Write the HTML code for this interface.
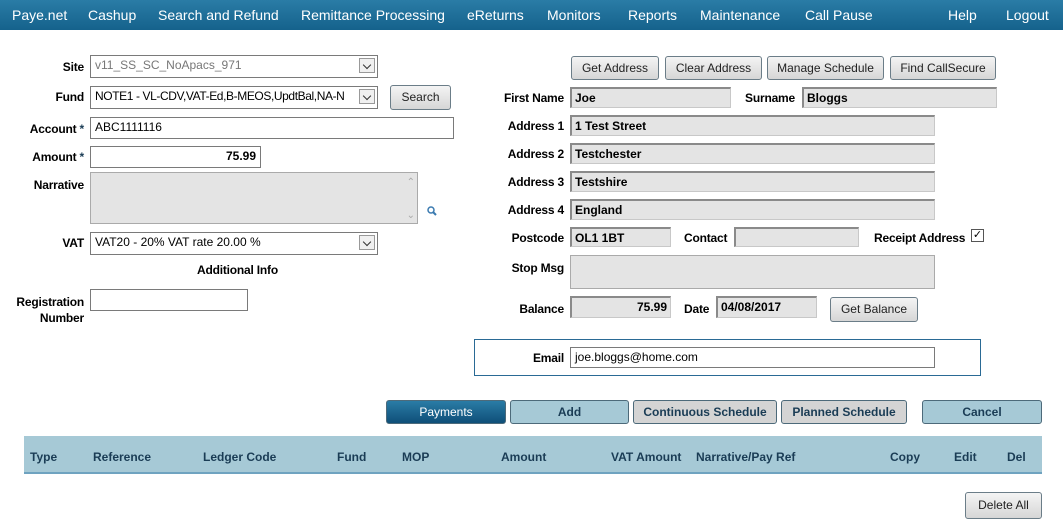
<!DOCTYPE html>
<html><head><style>
body{margin:0;width:1063px;height:528px;position:relative;background:#fff;font-family:"Liberation Sans",sans-serif;font-size:12px;color:#000;overflow:hidden}
.nav{position:absolute;left:0;top:0;width:1063px;height:30px;background:linear-gradient(#2a7ca6,#15628c)}
.nav span{position:absolute;top:7px;color:#fff;font-size:14px;white-space:nowrap}
.a{position:absolute;white-space:nowrap}
.l{position:absolute;font-weight:bold;text-align:right;white-space:nowrap;font-size:12px;letter-spacing:-0.2px}
.i{position:absolute;border:1px solid #7a7a7a;background:#fff;box-sizing:border-box;padding:2px 4px;font-size:12px;white-space:nowrap;overflow:hidden}
.g{background:#e4e4e4;border:1px solid #c8c8c8;border-top:2px solid #8a8a8a;border-left:2px solid #8a8a8a;font-weight:bold;padding:2px 3px 0}
.dd{position:absolute;right:2px;top:2px;width:16px;height:15px;border:1px solid #999;background:#f0f0f0;box-sizing:border-box}
.dd:after{content:"";position:absolute;left:4px;top:3px;width:5px;height:5px;border-right:1.5px solid #333;border-bottom:1.5px solid #333;transform:rotate(45deg)}
.b{position:absolute;box-sizing:border-box;border:1px solid #6b7d88;border-radius:3px;background:linear-gradient(#f4f4f4,#d6d6d6);text-align:center;font-size:12px;line-height:22px;color:#222}
.t{position:absolute;box-sizing:border-box;border:1px solid #4d6a7a;border-radius:3px;background:#a6c9d6;text-align:center;font-weight:bold;font-size:12px;line-height:22px;color:#1a3c55}
.h{position:absolute;top:450px;font-weight:bold;color:#1a3c55;font-size:12px}
</style></head><body>
<div class="nav">
<span style="left:12px">Paye.net</span><span style="left:88px">Cashup</span><span style="left:158px">Search and Refund</span><span style="left:301px">Remittance Processing</span><span style="left:467px">eReturns</span><span style="left:547px">Monitors</span><span style="left:628px">Reports</span><span style="left:700px">Maintenance</span><span style="left:805px">Call Pause</span><span style="left:948px">Help</span><span style="left:1006px">Logout</span>
</div>

<div class="l" style="right:979px;top:60px">Site</div>
<div class="i" style="left:90px;top:55px;width:288px;height:23px;color:#777">v11_SS_SC_NoApacs_971<div class="dd"></div></div>
<div class="l" style="right:979px;top:90px">Fund</div>
<div class="i" style="left:90px;top:86px;width:288px;height:23px;letter-spacing:-0.4px">NOTE1 - VL-CDV,VAT-Ed,B-MEOS,UpdtBal,NA-N<div class="dd"></div></div>
<div class="b" style="left:390px;top:85px;width:61px;height:25px">Search</div>
<div class="l" style="right:979px;top:122px">Account <span style="color:#1a3c55">*</span></div>
<div class="i" style="left:90px;top:117px;width:364px;height:22px">ABC1111116</div>
<div class="l" style="right:979px;top:150px">Amount <span style="color:#1a3c55">*</span></div>
<div class="i" style="left:90px;top:146px;width:171px;height:22px;text-align:right;font-weight:bold">75.99</div>
<div class="l" style="right:979px;top:178px">Narrative</div>
<div class="i" style="left:90px;top:172px;width:328px;height:52px;background:#e4e4e4;border-color:#aaa"><div class="a" style="right:2px;top:4px;color:#aaa;font-size:10px">&#8963;</div><div class="a" style="right:2px;bottom:2px;color:#aaa;font-size:10px">&#8964;</div></div>
<svg class="a" style="left:426px;top:205px" width="12" height="12"><circle cx="5" cy="5" r="3" fill="none" stroke="#3a7ab0" stroke-width="1.5"/><line x1="7" y1="7" x2="10" y2="10" stroke="#3a7ab0" stroke-width="2"/></svg>
<div class="l" style="right:979px;top:236px">VAT</div>
<div class="i" style="left:90px;top:232px;width:288px;height:23px">VAT20 - 20% VAT rate 20.00 %<div class="dd"></div></div>
<div class="l" style="left:197px;top:263px">Additional Info</div>
<div class="l" style="right:979px;top:294px;line-height:16px">Registration<br>Number</div>
<div class="i" style="left:90px;top:289px;width:158px;height:22px"></div>

<div class="b" style="left:571px;top:56px;width:88px;height:24px">Get Address</div>
<div class="b" style="left:665px;top:56px;width:97px;height:24px">Clear Address</div>
<div class="b" style="left:767px;top:56px;width:117px;height:24px">Manage Schedule</div>
<div class="b" style="left:890px;top:56px;width:106px;height:24px">Find CallSecure</div>

<div class="l" style="right:499px;top:91px">First Name</div>
<div class="i g" style="left:570px;top:87px;width:161px;height:21px">Joe</div>
<div class="l" style="right:268px;top:91px">Surname</div>
<div class="i g" style="left:802px;top:87px;width:195px;height:21px">Bloggs</div>
<div class="l" style="right:499px;top:119px">Address 1</div>
<div class="i g" style="left:570px;top:115px;width:365px;height:21px">1 Test Street</div>
<div class="l" style="right:499px;top:147px">Address 2</div>
<div class="i g" style="left:570px;top:143px;width:365px;height:21px">Testchester</div>
<div class="l" style="right:499px;top:175px">Address 3</div>
<div class="i g" style="left:570px;top:171px;width:365px;height:21px">Testshire</div>
<div class="l" style="right:499px;top:203px">Address 4</div>
<div class="i g" style="left:570px;top:199px;width:365px;height:21px">England</div>
<div class="l" style="right:499px;top:231px">Postcode</div>
<div class="i g" style="left:570px;top:227px;width:101px;height:20px">OL1 1BT</div>
<div class="l" style="left:684px;top:231px">Contact</div>
<div class="i g" style="left:734px;top:227px;width:125px;height:20px"></div>
<div class="l" style="left:874px;top:231px">Receipt Address</div>
<div class="a" style="left:971px;top:229px;width:11px;height:11px;border:1px solid #555;font-size:11px;line-height:11px;text-align:center">&#10003;</div>
<div class="l" style="right:499px;top:261px">Stop Msg</div>
<div class="i g" style="left:570px;top:255px;width:365px;height:34px;border-width:1px;border-color:#aaa"></div>
<div class="l" style="right:499px;top:302px">Balance</div>
<div class="i g" style="left:570px;top:296px;width:101px;height:22px;text-align:right">75.99</div>
<div class="l" style="left:684px;top:302px">Date</div>
<div class="i g" style="left:716px;top:296px;width:101px;height:22px">04/08/2017</div>
<div class="b" style="left:830px;top:297px;width:88px;height:25px">Get Balance</div>

<div class="a" style="left:474px;top:339px;width:505px;height:35px;border:1px solid #2a6a95"></div>
<div class="l" style="right:499px;top:351px">Email</div>
<div class="i" style="left:570px;top:347px;width:365px;height:21px">joe.bloggs@home.com</div>

<div class="t" style="left:386px;top:400px;width:120px;height:24px;background:linear-gradient(#2a7ca6,#0f4f78);color:#fff;font-weight:normal">Payments</div>
<div class="t" style="left:510px;top:400px;width:119px;height:24px">Add</div>
<div class="t" style="left:633px;top:400px;width:144px;height:24px;background:#d4d4d4">Continuous Schedule</div>
<div class="t" style="left:781px;top:400px;width:126px;height:24px;background:#d4d4d4">Planned Schedule</div>
<div class="t" style="left:922px;top:400px;width:120px;height:24px">Cancel</div>

<div class="a" style="left:24px;top:436px;width:1018px;height:36px;background:#a6c9d6;border-bottom:2px solid #6fa3c0"></div>
<div class="h" style="left:30px">Type</div><div class="h" style="left:93px">Reference</div><div class="h" style="left:203px">Ledger Code</div><div class="h" style="left:337px">Fund</div><div class="h" style="left:402px">MOP</div><div class="h" style="left:501px">Amount</div><div class="h" style="left:611px">VAT Amount</div><div class="h" style="left:696px">Narrative/Pay Ref</div><div class="h" style="left:890px">Copy</div><div class="h" style="left:954px">Edit</div><div class="h" style="left:1007px">Del</div>
<div class="b" style="left:965px;top:492px;width:77px;height:27px;line-height:25px">Delete All</div>
</body></html>
